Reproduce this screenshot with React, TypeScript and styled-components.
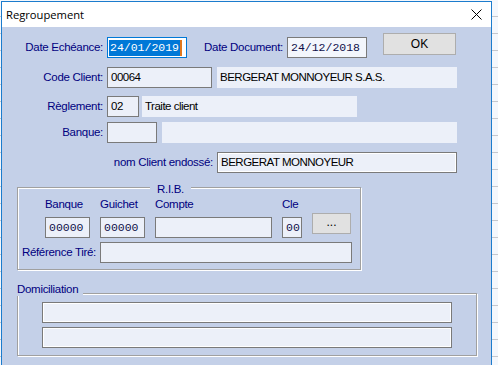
import React from 'react';
import styled, { createGlobalStyle, css } from 'styled-components';

const GlobalStyle = createGlobalStyle`
  html, body {
    margin: 0;
    padding: 0;
  }
  body {
    width: 498px;
    height: 365px;
    overflow: hidden;
    background-color: #f4f7fc;
    background-image: repeating-linear-gradient(to bottom, transparent 0 16px, #c4c7cd 16px 17px);
    font-family: 'Liberation Sans', Arial, sans-serif;
  }
`;

const Window = styled.div`
  box-sizing: border-box;
  margin: 1px 0 0 1px;
  width: 491px;
  height: 364px;
  overflow: hidden;
  border: 1px solid #1c7ccd;
  border-bottom: none;
  display: flex;
  flex-direction: column;
`;

const TitleBar = styled.div`
  height: 25px;
  flex-shrink: 0;
  background: #fff;
  display: flex;
  align-items: center;
  justify-content: space-between;
  padding: 0 9px 0 4px;
  font-family: 'Open Sans', 'Noto Sans', sans-serif;
  font-size: 11.2px;
  color: #000;
`;

const Body = styled.div`
  flex: 1;
  background: #c4d0e8;
  padding-top: 6px;
  font-size: 11.5px;
  letter-spacing: -0.3px;
  color: #00007f;
`;

const Row = styled.div<{ $mt: number; $h?: number }>`
  display: flex;
  align-items: ${(p) => (p.$h ? 'flex-end' : 'center')};
  height: ${(p) => p.$h ?? 21}px;
  margin-top: ${(p) => p.$mt}px;
`;

const Label = styled.span<{ $w: number }>`
  box-sizing: border-box;
  flex-shrink: 0;
  width: ${(p) => p.$w}px;
  padding-right: 4px;
  text-align: right;
  line-height: 21px;
  white-space: nowrap;
`;

type FieldKind = 'flat' | 'sunken' | 'inset' | 'date' | 'focus';

const Field = styled.div<{ $w: number; $ml?: number; $kind?: FieldKind; $mono?: boolean }>`
  box-sizing: border-box;
  flex-shrink: 0;
  width: ${(p) => p.$w}px;
  height: 21px;
  margin-left: ${(p) => p.$ml ?? 0}px;
  padding: 0 3px;
  background: #ecf0f9;
  color: #000;
  font-size: 11.5px;
  letter-spacing: -0.5px;
  line-height: 21px;
  white-space: nowrap;
  overflow: hidden;
  ${(p) =>
    p.$kind !== 'flat' &&
    css`
      border: 1px solid #7a7a7a;
      line-height: 19px;
    `}
  ${(p) =>
    p.$kind === 'inset' &&
    css`
      box-shadow: inset 0 0 0 1px #fff;
    `}
  ${(p) =>
    p.$kind === 'date' &&
    css`
      background: #f3f6fc;
    `}
  ${(p) =>
    p.$kind === 'focus' &&
    css`
      border-color: #0078d7;
      background: #fff;
      padding: 0;
      display: flex;
      align-items: center;
    `}
  ${(p) =>
    p.$mono &&
    css`
      font-family: 'Liberation Mono', 'DejaVu Sans Mono', monospace;
      letter-spacing: 0;
      color: #10104a;
    `}
`;

const Selection = styled.span`
  margin-left: 1px;
  padding: 0 1px;
  height: 16px;
  line-height: 16px;
  background: #0078d7;
  color: #fff;
`;

const Caret = styled.span`
  width: 2px;
  height: 16px;
  background: #e0781e;
`;

const Button = styled.button<{ $w: number }>`
  box-sizing: border-box;
  width: ${(p) => p.$w}px;
  height: 22px;
  padding: 0;
  border: 1px solid #adadad;
  background: #e1e1e1;
  color: #000;
  font-family: 'Liberation Sans', Arial, sans-serif;
  font-size: 12px;
  letter-spacing: 0;
`;

const OkButton = styled(Button)`
  margin-left: 16px;
  align-self: flex-start;
`;

const MoreButton = styled(Button)`
  grid-row: 2;
  grid-column: 5;
  height: 21px;
  margin-top: -4px;
  line-height: 14px;
  padding-bottom: 4px;
`;

const Group = styled.div<{ $w: number; $h: number; $mt: number }>`
  box-sizing: border-box;
  width: ${(p) => p.$w}px;
  height: ${(p) => p.$h}px;
  margin: ${(p) => p.$mt}px 0 0 15px;
  border: 1px solid #a0a0a0;
  box-shadow: inset 1px 1px 0 #fff, 1px 1px 0 #fff;
`;

const GroupTitle = styled.div<{ $ml: number; $mt: number; $pad: string }>`
  width: fit-content;
  margin: ${(p) => p.$mt}px 0 0 ${(p) => p.$ml}px;
  padding: ${(p) => p.$pad};
  line-height: 14px;
  background: #c4d0e8;
`;

const RibGrid = styled.div`
  display: grid;
  grid-template-columns: 45px 45px 117px 20px 39px;
  grid-template-rows: 14px 21px;
  column-gap: 10px;
  row-gap: 6px;
  margin: 1px 0 0 27px;
`;

const ColLabel = styled.span`
  line-height: 14px;
  white-space: nowrap;
`;

const RefRow = styled.div`
  display: flex;
  align-items: center;
  margin-top: 4px;
`;

const DomField = styled(Field)<{ $mt: number }>`
  margin: ${(p) => p.$mt}px 0 0 24px;
`;

function CloseIcon(): React.ReactElement {
  return (
    <svg width="11" height="11" viewBox="0 0 11 11">
      <path d="M0.5 0.5 L10.5 10.5 M10.5 0.5 L0.5 10.5" stroke="#000" strokeWidth="1" fill="none" />
    </svg>
  );
}

function App(): React.ReactElement {
  return (
    <>
      <GlobalStyle />
      <Window>
        <TitleBar>
          <span>Regroupement</span>
          <CloseIcon />
        </TitleBar>
        <Body>
          <Row $mt={0} $h={25}>
            <Label $w={105}>Date Echéance:</Label>
            <Field $w={80} $kind="focus" $mono>
              <Selection>24/01/2019</Selection>
              <Caret />
            </Field>
            <Label $w={100}>Date Document:</Label>
            <Field $w={80} $kind="date" $mono>
              24/12/2018
            </Field>
            <OkButton $w={73}>OK</OkButton>
          </Row>
          <Row $mt={9}>
            <Label $w={105}>Code Client:</Label>
            <Field $w={105} $kind="sunken">
              00064
            </Field>
            <Field $w={240} $ml={5} $kind="flat">
              BERGERAT MONNOYEUR S.A.S.
            </Field>
          </Row>
          <Row $mt={8}>
            <Label $w={105}>Règlement:</Label>
            <Field $w={32} $kind="sunken">
              02
            </Field>
            <Field $w={215} $ml={3} $kind="flat">
              Traite client
            </Field>
          </Row>
          <Row $mt={5}>
            <Label $w={105}>Banque:</Label>
            <Field $w={50} $kind="sunken" />
            <Field $w={295} $ml={5} $kind="flat" />
          </Row>
          <Row $mt={9}>
            <Label $w={215}>nom Client endossé:</Label>
            <Field $w={240} $kind="inset">
              BERGERAT MONNOYEUR
            </Field>
          </Row>

          <Group $w={344} $h={83} $mt={14}>
            <GroupTitle $ml={132} $mt={-6} $pad="0 7px">
              R.I.B.
            </GroupTitle>
            <RibGrid>
              <ColLabel>Banque</ColLabel>
              <ColLabel>Guichet</ColLabel>
              <ColLabel>Compte</ColLabel>
              <ColLabel>Cle</ColLabel>
              <span />
              <Field $w={45} $kind="sunken" $mono>
                00000
              </Field>
              <Field $w={45} $kind="sunken" $mono>
                00000
              </Field>
              <Field $w={117} $kind="sunken" />
              <Field $w={20} $kind="sunken" $mono>
                00
              </Field>
              <MoreButton $w={39}>...</MoreButton>
            </RibGrid>
            <RefRow>
              <Label $w={82}>Référence Tiré:</Label>
              <Field $w={252} $kind="sunken" />
            </RefRow>
          </Group>

          <Group $w={460} $h={63} $mt={23}>
            <GroupTitle $ml={-1} $mt={-12} $pad="0 5px 0 0">
              Domiciliation
            </GroupTitle>
            <DomField $w={410} $mt={6} $kind="inset" />
            <DomField $w={410} $mt={4} $kind="inset" />
          </Group>
        </Body>
      </Window>
    </>
  );
}

export default App;
